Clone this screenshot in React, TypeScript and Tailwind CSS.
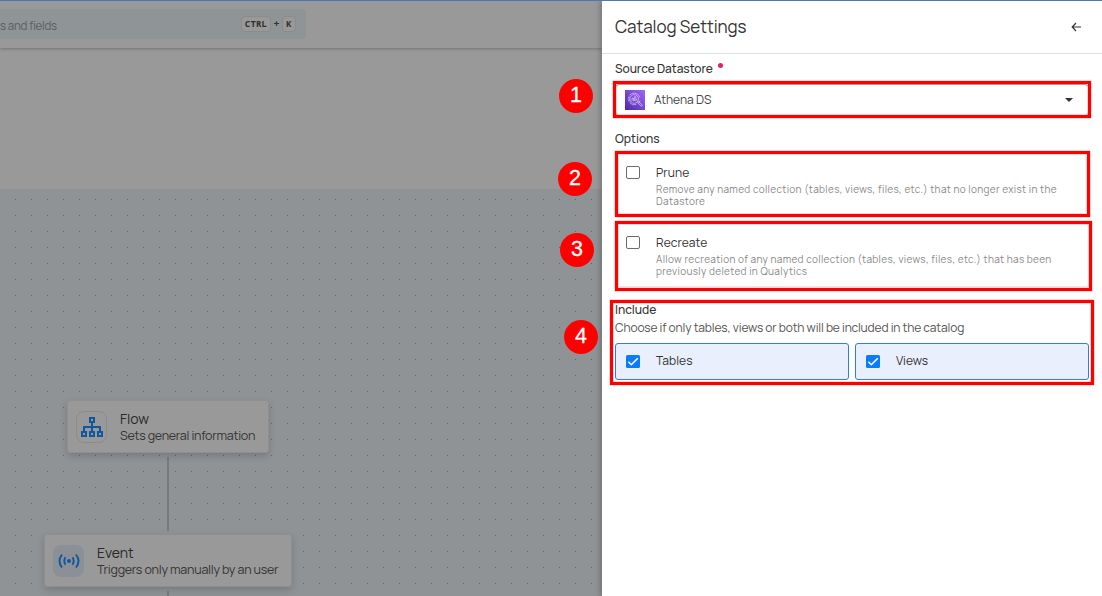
import React from "react";

function Marker({ n, className }: { n: number; className: string }) {
  return (
    <div
      className={`absolute flex h-[34px] w-[34px] items-center justify-center rounded-full bg-[#ff0000] font-['Liberation_Sans',sans-serif] text-[21.5px] leading-none text-white [-webkit-text-stroke:0.3px_white] ${className}`}
    >
      {n}
    </div>
  );
}

function Highlight({ className }: { className: string }) {
  return (
    <div
      className={`pointer-events-none absolute border-3 border-[#ff0000] shadow-[0_0_0_0.5px_#ffb0b0,inset_0_0_0_0.5px_#ffb0b0] ${className}`}
    />
  );
}

function Checkbox({ checked = false }: { checked?: boolean }) {
  return checked ? (
    <svg className="h-[13px] w-[14px] shrink-0" viewBox="0 0 14 13">
      <rect width="14" height="13" rx="1.5" fill="#0a7cf5" />
      <path d="M2.4 6.8 5.3 9.7 11.8 3.2" fill="none" stroke="#fff" strokeWidth="1.6" />
    </svg>
  ) : (
    <div className="h-[13px] w-[14px] shrink-0 rounded-[2px] border border-[#6c6c6c] bg-white" />
  );
}

function Option({ title, lines }: { title: string; lines: string[] }) {
  return (
    <div className="flex h-[64px] rounded-[3px] border border-[#e8e8e8] px-[10px] pt-[12px]">
      <Checkbox />
      <div className="ml-4 -mt-[1px] whitespace-nowrap">
        <div className="text-[12px] leading-[15px] tracking-[0.1px] text-[#333]">{title}</div>
        <div className="mt-[3px] text-[10px] leading-[12px] tracking-[0.34px] text-[#888]">
          {lines.map((line) => (
            <div key={line}>{line}</div>
          ))}
        </div>
      </div>
    </div>
  );
}

function Choice({ label }: { label: string }) {
  return (
    <div className="flex h-[37px] flex-1 items-center rounded-[3px] border border-[#2f7de1] bg-[#e9effc] px-[10px]">
      <Checkbox checked />
      <span className="-mt-[2px] ml-4 text-[12px] leading-[15px] tracking-[0.05px] text-[#333]">{label}</span>
    </div>
  );
}

function AthenaIcon() {
  return (
    <svg className="h-5 w-5" viewBox="0 0 20 20">
      <defs>
        <linearGradient id="athena" x1="0" y1="1" x2="1" y2="0">
          <stop offset="0" stopColor="#4d27a8" />
          <stop offset="1" stopColor="#a166ff" />
        </linearGradient>
      </defs>
      <rect width="20" height="20" fill="url(#athena)" />
      <g fill="none" stroke="#e6dcfb" strokeWidth="0.7" opacity="0.9">
        <path d="M4.5 5.3A6 6 0 0 1 14.9 7.6M15.1 10.5A6 6 0 0 1 13 13.7M11.2 14.6A6 6 0 0 1 4.7 12.6" />
        <circle cx="9.2" cy="9" r="4.3" />
        <path d="M3 7.2h2M2.7 9h2.2M3 10.8h2.2M7 11V8h1.4v3.2M9.4 11.2V6.6h1.4v4.6M11.8 10.8V8.6M12.6 12.4l1-.9 3.5 3.3c.6.7-.5 1.8-1.2 1.2z" />
      </g>
    </svg>
  );
}

function Node({ title, subtitle, subtitleClass, icon, className }: {
  title: string;
  subtitle: string;
  subtitleClass: string;
  icon: React.ReactNode;
  className: string;
}) {
  return (
    <div
      className={`absolute flex h-[53px] items-center rounded-[3px] border border-[#8f8f8f] bg-[#999] pl-2 shadow-[0_3px_7px_rgba(0,0,0,0.17)] ${className}`}
    >
      {icon}
      <div className="ml-[13px] whitespace-nowrap">
        <div className="text-[14px] leading-[17px] text-[#292929]">{title}</div>
        <div className={`pt-px text-[12.5px] leading-4 text-[#353535] ${subtitleClass}`}>{subtitle}</div>
      </div>
    </div>
  );
}

export default function App() {
  return (
    <div className="relative flex h-[596px] w-[1102px] flex-col overflow-hidden border-t border-[#4778b8] bg-[#999] font-[Manrope,Inter,sans-serif]">
      <div className="flex min-h-0 flex-1">
        <main className="flex w-[602px] flex-col">
          <header className="z-10 flex h-[47px] shrink-0 items-start bg-[#999] pt-2 shadow-[0_1px_3px_rgba(0,0,0,0.25)]">
            <div className="flex h-[30px] w-[306px] items-center rounded-r bg-[#8f9497] pr-[10px]">
              <span className="mt-[3px] whitespace-nowrap text-[11.5px] tracking-[-0.25px] text-[#5b5e60]">s and fields</span>
              <div className="ml-auto flex items-center text-[9px] font-bold text-[#303030]">
                <kbd className="flex h-4 w-[30px] items-center justify-center rounded-[4px] border border-[#8b8b8b] bg-[#999] font-['Noto_Sans_Mono','DejaVu_Sans_Mono',monospace] text-[9px] tracking-[0.2px]">CTRL</kbd>
                <span className="w-[11px] text-center font-['DejaVu_Sans_Mono',monospace]">+</span>
                <kbd className="flex h-4 w-[14px] items-center justify-center rounded-[4px] border border-[#8b8b8b] bg-[#999] font-['Noto_Sans_Mono','DejaVu_Sans_Mono',monospace] text-[9px]">K</kbd>
              </div>
            </div>
          </header>
          <div className="h-[141px] shrink-0" />
          <section className="relative flex-1 bg-[#8f9396]">
            <svg className="absolute inset-0 h-full w-full">
              <defs>
                <pattern id="grid" x="15" y="10" width="16" height="16" patternUnits="userSpaceOnUse">
                  <rect width="1" height="1" fill="#606466" />
                </pattern>
              </defs>
              <rect width="100%" height="100%" fill="url(#grid)" />
            </svg>
            <div className="absolute left-[167px] top-[268px] h-[74px] w-[2px] bg-[#77797b]" />
            <div className="absolute left-[167px] top-[402px] h-[5px] w-[2px] bg-[#77797b]" />
            <Node
              className="left-[67px] top-[211px] w-[202px]"
              title="Flow"
              subtitle="Sets general information"
              subtitleClass="tracking-[-0.27px]"
              icon={
                <div className="flex h-8 w-[31px] items-center justify-center rounded-[8px] border border-[#8c8c8c]">
                  <svg className="h-[22px] w-[24px] shrink-0" viewBox="0 0 24 22" fill="none" stroke="#11579f" strokeWidth="2">
                    <path d="M10 2h4v4h-4zM2 16h4v4H2zM10 16h4v4h-4zM18 16h4v4h-4zM12 6v10M4 16v-5h16v5" />
                  </svg>
                </div>
              }
            />
            <Node
              className="left-[44px] top-[345px] w-[248px]"
              title="Event"
              subtitle="Triggers only manually by an user"
              subtitleClass="tracking-[-0.25px]"
              icon={
                <div className="flex h-8 w-[31px] items-center justify-center rounded-[8px] bg-[#8b9097]">
                  <svg className="h-[16px] w-[22px]" viewBox="0 0 22 16" fill="none" stroke="#11579f" strokeWidth="1.9">
                    <circle cx="11" cy="8" r="2" fill="#11579f" stroke="none" />
                    <path d="M7.5 4.3q-2.4 3.7 0 7.4M14.5 4.3q2.4 3.7 0 7.4M4 1.5q-5 6.5 0 13M18 1.5q5 6.5 0 13" />
                  </svg>
                </div>
              }
            />
          </section>
        </main>

        <aside className="z-20 flex w-[500px] flex-col bg-white shadow-[-2px_0_5px_rgba(0,0,0,0.22)]">
          <div className="flex h-[53px] shrink-0 items-center justify-between border-b border-[#e0e0e0] pl-[13px] pr-[20px]">
            <h1 className="text-[17px] tracking-[-0.06px] text-[#333]">Catalog Settings</h1>
            <svg className="h-[10px] w-[11px]" viewBox="0 0 11 10" fill="none" stroke="#333" strokeWidth="1.2">
              <path d="M10 5H1.5M5 1 1.2 5 5 9" />
            </svg>
          </div>
          <div className="flex flex-col pl-[13px] pr-[13px]">
            <label className="mt-[7px] flex h-4 items-center text-[12px] font-medium tracking-[-0.06px] text-[#333]">
              Source Datastore
              <span className="mb-[7px] ml-[5px] h-[5px] w-[5px] rounded-full bg-[#e91e63]" />
            </label>
            <div className="mt-[7px] flex h-[32px] items-center rounded border border-[#777] pl-[9px] pr-[15px]">
              <AthenaIcon />
              <span className="-mt-px ml-[9px] text-[12px] tracking-[-0.06px] text-[#444]">Athena DS</span>
              <svg className="ml-auto h-1 w-2" viewBox="0 0 8 4"><path d="M0 0h8L4 4z" fill="#333" /></svg>
            </div>
            <h2 className="mt-[15px] h-4 text-[12px] font-medium leading-4 text-[#333]">Options</h2>
            <div className="mt-[6px] flex flex-col gap-[6px]">
              <Option title="Prune" lines={[
                "Remove any named collection (tables, views, files, etc.) that no longer exist in the",
                "Datastore",
              ]} />
              <Option title="Recreate" lines={[
                "Allow recreation of any named collection (tables, views, files, etc.) that has been",
                "previously deleted in Qualytics",
              ]} />
            </div>
            <h2 className="mt-[15px] h-4 text-[12px] font-medium leading-4 text-[#333]">Include</h2>
            <p className="mt-[2px] h-4 whitespace-nowrap text-[12px] leading-4 tracking-[-0.14px] text-[#555]">Choose if only tables, views or both will be included in the catalog</p>
            <div className="mt-[7px] flex gap-[6px]">
              <Choice label="Tables" />
              <Choice label="Views" />
            </div>
          </div>
        </aside>
      </div>

      <div className="pointer-events-none absolute inset-x-0 -top-px bottom-0 z-30">
        <Highlight className="left-[613px] top-[81px] h-[37px] w-[478px]" />
        <Highlight className="left-[615px] top-[151px] h-[66px] w-[475px]" />
        <Highlight className="left-[615px] top-[221px] h-[70px] w-[477px]" />
        <Highlight className="left-[610px] top-[300px] h-[85px] w-[484px]" />
        <Marker n={1} className="left-[559px] top-[79px]" />
        <Marker n={2} className="left-[558px] top-[162px]" />
        <Marker n={3} className="left-[560px] top-[233px]" />
        <Marker n={4} className="left-[564px] top-[320px]" />
      </div>
    </div>
  );
}
